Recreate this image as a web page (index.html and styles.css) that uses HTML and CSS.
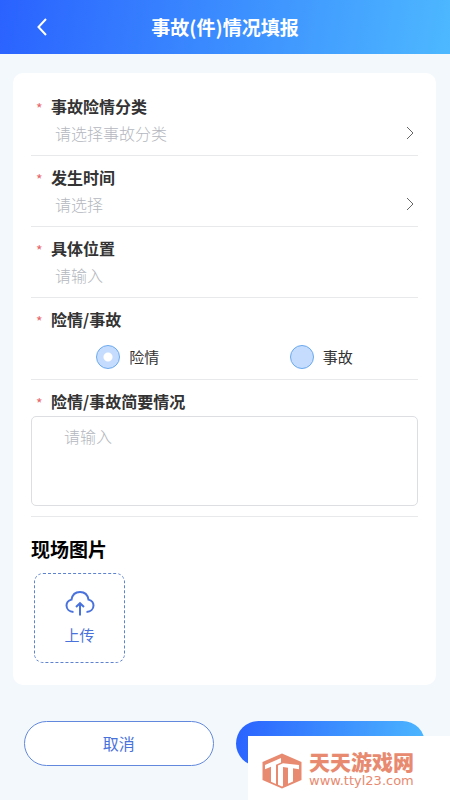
FILE: index.html
```html
<!DOCTYPE html>
<html lang="zh-CN">
<head>
<meta charset="utf-8">
<meta name="viewport" content="width=device-width, initial-scale=1">
<title>事故(件)情况填报</title>
<link rel="stylesheet" href="styles.css">
</head>
<body>
<header class="topbar">
  <button class="back" type="button" aria-label="返回">
    <svg viewBox="0 0 10 18" width="10" height="18"><path d="M9 1 1.500 9 9 17"/></svg>
  </button>
  <h1 class="topbar-title">事故(件)情况填报</h1>
</header>
<form class="form">
  <main class="card">
    <div class="field">
      <label class="label" for="category">事故险情分类</label>
      <div class="picker">
        <select class="control" id="category" required><option value="">请选择事故分类</option></select>
        <svg class="chevron" viewBox="0 0 8 14" width="8" height="14"><path d="M1 1l6 6-6 6"/></svg>
      </div>
    </div>
    <div class="field">
      <label class="label" for="time">发生时间</label>
      <div class="picker">
        <select class="control" id="time" required><option value="">请选择</option></select>
        <svg class="chevron" viewBox="0 0 8 14" width="8" height="14"><path d="M1 1l6 6-6 6"/></svg>
      </div>
    </div>
    <div class="field">
      <label class="label" for="place">具体位置</label>
      <input class="control" id="place" type="text" placeholder="请输入" required>
    </div>
    <div class="field" role="radiogroup" aria-labelledby="kind">
      <div class="label" id="kind">险情/事故</div>
      <div class="choices">
        <label class="choice"><input class="radio" type="radio" name="kind" checked>险情</label>
        <label class="choice"><input class="radio" type="radio" name="kind">事故</label>
      </div>
    </div>
    <div class="field">
      <label class="label" for="summary">险情/事故简要情况</label>
      <textarea class="summary" id="summary" placeholder="请输入" required></textarea>
    </div>
    <section class="photos">
      <h2 class="photos-title">现场图片</h2>
      <button class="upload" type="button">
        <svg viewBox="0 0 30 26" width="30" height="26"><path d="M8.500 22C4.500 21.800 1.500 19.200 1.500 15.600c0-3 1.900-5.200 5-6C7.300 4.900 10.600 2 15 2s7.700 2.900 8.500 7.600c3.100.8 5 3 5 6 0 3.600-3 6.200-7 6.400M15 25.500V13.500M11 17l4-3.800 4 3.800"/></svg>
        <span>上传</span>
      </button>
    </section>
  </main>
  <footer class="actions">
    <button class="btn btn-cancel" type="button">取消</button>
    <button class="btn btn-submit" type="submit" aria-label="提交"></button>
  </footer>
</form>
<aside class="badge">
  <svg class="badge-logo" viewBox="0 0 40 36" width="40" height="36">
    <path class="badge-fill" d="M20 0.500 0.500 9v18L20 35.500 39.500 27V9z"/>
    <path class="badge-cut" d="M3 12 19 5V9.500L14 11.700V31L9 28.800V13.800L3 16.200zM16 12.500 21 10.300 37 12v4.200L31 15.300V28.600L26 30.800V14.700L21 14V33L20 33.400 16 31.800z"/>
  </svg>
  <div class="badge-text">
    <strong class="badge-name">天天游戏网</strong>
    <span class="badge-url">www.ttyl23.com</span>
  </div>
</aside>
</body>
</html>
```
FILE: styles.css
```css
* {
  box-sizing: border-box;
}

body {
  margin: 0;
  min-height: 100vh;
  position: relative;
  background: #f3f8fc;
  color: #333;
  font-family: "Noto Sans CJK SC", sans-serif;
  font-size: 16px;
}

button,
input,
select,
textarea {
  font: inherit;
}

svg {
  fill: none;
  stroke: currentColor;
}

.topbar {
  display: grid;
  grid-template-columns: 84px 1fr 84px;
  align-items: center;
  height: 54px;
  background: linear-gradient(100deg, #2a62ff, #4db8ff);
  color: #fff;
}

.back {
  display: flex;
  justify-content: center;
  padding: 8px;
  border: 0;
  background: none;
  color: inherit;
  stroke-width: 2;
}

.topbar-title {
  margin: 0;
  font-size: 19px;
  line-height: 28px;
  text-align: center;
}

.card {
  margin: 19px 14px 0 13px;
  padding: 12px 18px 22px;
  border-radius: 10px;
  background: #fff;
}

.field {
  padding: 9px 0 7px;
  border-bottom: 1px solid #e8e9eb;
}

.field:has(.choices),
.field:has(.summary) {
  padding-bottom: 10px;
}

.label {
  display: flex;
  align-items: center;
  line-height: 24px;
  font-weight: 700;
}

.label::before {
  content: "*";
  width: 15px;
  height: 20px;
  margin-left: 5px;
  color: #e8656a;
  font-size: 14px;
  font-weight: 400;
}

.picker {
  display: flex;
  align-items: center;
  padding-right: 4px;
}

.control {
  display: block;
  flex: 1;
  width: 100%;
  height: 30px;
  padding: 0 24px;
  border: 0;
  appearance: none;
  background: none;
  color: #b4b7be;
  font-weight: 300;
  outline: none;
}

.control::placeholder,
.summary::placeholder {
  color: #b4b7be;
}

.chevron {
  color: #666;
}

.choices {
  display: grid;
  grid-template-columns: 1fr 1fr;
  margin-top: 14px;
}

.choice {
  display: flex;
  justify-content: center;
  align-items: center;
  gap: 9px;
  font-size: 15px;
  line-height: 24px;
}

.radio {
  width: 24px;
  height: 24px;
  margin: 0;
  border: 1px solid #69a9ee;
  border-radius: 50%;
  appearance: none;
  background: #c6dcff;
}

.radio:checked {
  background: radial-gradient(circle, #fff 4px, #c6dcff 5px);
}

.summary {
  display: block;
  width: 100%;
  height: 90px;
  margin-top: 3px;
  padding: 7px 32px;
  border: 1px solid #dcdee2;
  border-radius: 5px;
  background: none;
  font-weight: 300;
  line-height: 24px;
  resize: none;
}

.photos-title {
  margin: 18px 0 10px;
  color: #000;
  font-size: 19px;
  line-height: 28px;
}

.upload {
  display: flex;
  flex-direction: column;
  align-items: center;
  justify-content: center;
  gap: 8px;
  width: 91px;
  height: 90px;
  margin-left: 3px;
  padding: 0;
  border: 1px dashed #5c82d0;
  border-radius: 9px;
  background: none;
  color: #4a72dc;
  font-size: 15px;
  line-height: 22px;
  stroke-width: 2;
}

.actions {
  display: grid;
  grid-template-columns: 1fr 1fr;
  gap: 22px;
  padding: 36px 25px 34px 24px;
}

.btn {
  height: 45px;
  padding: 0 0 2px;
  border: 0;
  border-radius: 23px;
}

.btn-cancel {
  border: 1px solid #6288de;
  background: #fff;
  color: #4a72dc;
}

.btn-submit {
  background: linear-gradient(100deg, #2a62ff, #4db8ff);
}

.badge {
  position: absolute;
  right: 0;
  bottom: 0;
  display: flex;
  align-items: center;
  gap: 7px;
  height: 64px;
  padding: 6px 36px 0 14px;
  background: #fff;
  color: #e88a70;
}

.badge-fill {
  fill: #e88a70;
  stroke: none;
}

.badge-cut {
  fill: #fff;
  stroke: none;
}

.badge-text {
  display: flex;
  flex-direction: column;
  padding-bottom: 2px;
}

.badge-name {
  font-size: 21px;
  font-weight: 900;
  line-height: 22px;
}

.badge-url {
  font-family: "DejaVu Sans", sans-serif;
  font-size: 13px;
  line-height: 18px;
}
```
